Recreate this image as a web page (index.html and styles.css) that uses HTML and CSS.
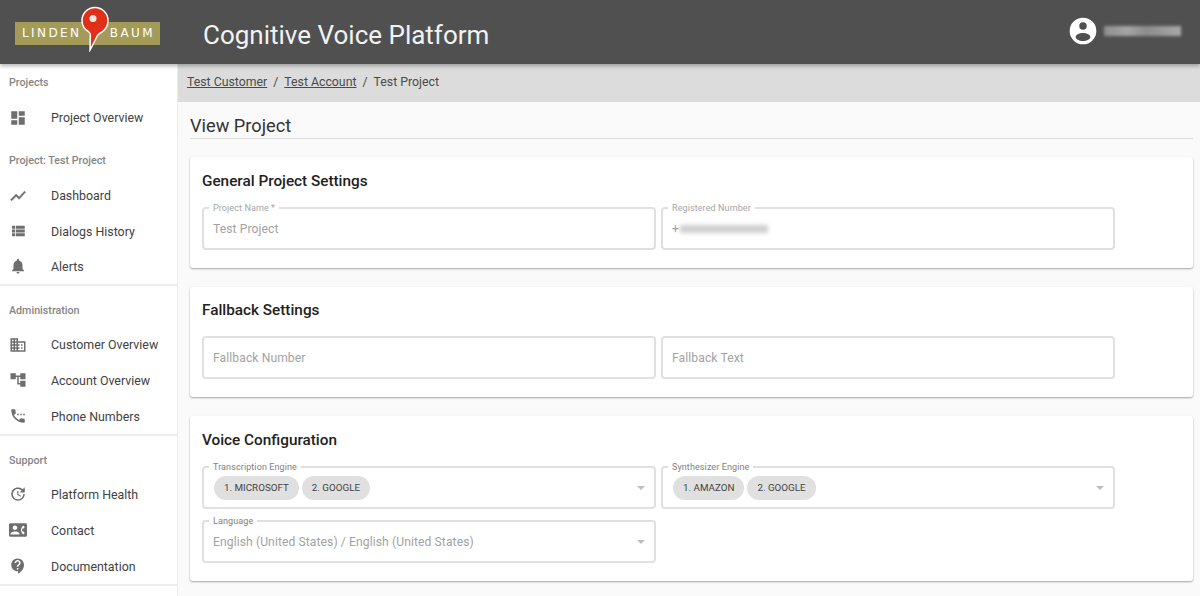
FILE: index.html
```html
<!DOCTYPE html>
<html lang="en">

<head>
    <meta charset="UTF-8">
    <meta name="viewport" content="width=device-width, initial-scale=1.0">
    <title>Cognitive Voice Platform</title>
    <link rel="stylesheet" href="styles.css">
</head>

<body>
    <header class="topbar">
        <div class="logo">
            <span class="logo-word">LINDEN</span>
            <span class="logo-word">BAUM</span>
            <svg class="logo-pin" viewBox="0 0 30 46">
                <path d="M15 1.500C7.800 1.500 2 7.300 2 14.500c0 5.500 3.200 9.500 7 11.500 1.500 1 1.500 2.500 1.300 5L10 44c3-5 5.500-11 7.500-14.500 .8-1.200 1.500-1.700 3-2.500C25 24.500 28 20 28 14.500 28 7.300 22.200 1.500 15 1.500z" fill="#e0301a" stroke="#fff" stroke-width="1.500"/>
                <circle cx="13" cy="12.500" r="3.500" fill="#f5e6df"/>
            </svg>
        </div>
        <div class="app-title">Cognitive Voice Platform</div>
        <div class="user">
            <svg class="user-icon" viewBox="0 0 24 24">
                <path fill-rule="evenodd" d="M12 2a10 10 0 1 0 0 20 10 10 0 0 0 0-20zm0 3.500a2.800 2.800 0 1 1 0 5.600 2.800 2.800 0 0 1 0-5.600zm0 8c3 0 5.500 1.300 5.500 3s-2.500 3-5.500 3-5.500-1.300-5.500-3 2.500-3 5.500-3z"/>
            </svg>
            <div class="user-name"></div>
        </div>
    </header>

    <div class="layout">
        <nav class="sidebar">
            <div class="nav-group">
                <div class="nav-label">Projects</div>
                <a class="nav-item nav-item-top"><svg viewBox="0 0 24 24"><path d="M3 13h8V3H3v10zm0 8h8v-6H3v6zm10 0h8V11h-8v10zm0-18v6h8V3h-8z"/></svg>Project Overview</a>
            </div>
            <div class="nav-group nav-project">
                <div class="nav-label">Project: Test Project</div>
                <a class="nav-item"><svg class="icon-bold" viewBox="0 0 24 24"><path d="M3.500 18.490l6-6.010 4 4L22 6.920l-1.410-1.410-7.090 7.970-4-4L2 16.990z"/></svg>Dashboard</a>
                <a class="nav-item"><svg viewBox="0 0 24 24"><path d="M4 14h4v-4H4v4zm0 5h4v-4H4v4zM4 9h4V5H4v4zm5 5h12v-4H9v4zm0 5h12v-4H9v4zM9 5v4h12V5H9z"/></svg>Dialogs History</a>
                <a class="nav-item"><svg viewBox="0 0 24 24"><path d="M12 22c1.100 0 2-.9 2-2h-4c0 1.100.89 2 2 2zm6-6v-5c0-3.070-1.640-5.640-4.500-6.320V4c0-.83-.67-1.500-1.500-1.500s-1.500.67-1.500 1.500v.68C7.630 5.360 6 7.920 6 11v5l-2 2v1h16v-1l-2-2z"/></svg>Alerts</a>
            </div>
            <div class="nav-group nav-lower">
                <div class="nav-label">Administration</div>
                <a class="nav-item"><svg viewBox="0 0 24 24"><path d="M12 7V3H2v18h20V7H12zM6 19H4v-2h2v2zm0-4H4v-2h2v2zm0-4H4V9h2v2zm0-4H4V5h2v2zm4 12H8v-2h2v2zm0-4H8v-2h2v2zm0-4H8V9h2v2zm0-4H8V5h2v2zm10 12h-8v-2h2v-2h-2v-2h2v-2h-2V9h8v10zm-2-8h-2v2h2v-2zm0 4h-2v2h2v-2z"/></svg>Customer Overview</a>
                <a class="nav-item"><svg viewBox="0 0 24 24"><path d="M22 11V3h-7v3H9V3H2v8h7V8h2v10h4v3h7v-8h-7v3h-2V8h2v3z"/></svg>Account Overview</a>
                <a class="nav-item"><svg viewBox="0 0 24 24"><path d="M13 9h-2v2h2V9zm4 0h-2v2h2V9zm3 6.500c-1.250 0-2.450-.2-3.570-.57-.35-.11-.74-.03-1.020.24l-2.200 2.200c-2.830-1.440-5.150-3.750-6.590-6.580l2.200-2.210c.28-.27.36-.66.25-1.010C8.700 6.450 8.500 5.250 8.500 4c0-.55-.45-1-1-1H4c-.55 0-1 .45-1 1 0 9.390 7.610 17 17 17 .55 0 1-.45 1-1v-3.500c0-.55-.45-1-1-1zM19 9v2h2V9h-2z"/></svg>Phone Numbers</a>
            </div>
            <div class="nav-group nav-lower">
                <div class="nav-label">Support</div>
                <a class="nav-item"><svg viewBox="0 0 24 24"><path d="M21 10.120h-6.780l2.740-2.820c-2.730-2.700-7.150-2.800-9.880-.1-2.730 2.710-2.730 7.080 0 9.790s7.150 2.710 9.880 0C18.320 15.650 19 14.080 19 12.100h2c0 1.980-.88 4.550-2.640 6.290-3.510 3.480-9.210 3.480-12.720 0-3.500-3.470-3.530-9.110-.02-12.580s9.140-3.470 12.650 0L21 3v7.120zM12.500 8v4.250l3.500 2.080-.72 1.210L11 13V8h1.500z"/></svg>Platform Health</a>
                <a class="nav-item"><svg viewBox="0 0 24 24"><path d="M22 3H2C.9 3 0 3.900 0 5v14c0 1.100.9 2 2 2h20c1.100 0 1.990-.9 1.990-2L24 5c0-1.100-.9-2-2-2zM8 6c1.660 0 3 1.340 3 3s-1.340 3-3 3-3-1.340-3-3 1.340-3 3-3zm6 12H2v-1c0-2 4-3.100 6-3.100s6 1.100 6 3.100v1zm3.850-4h1.640L21 16l-1.990 1.990c-1.310-.98-2.280-2.380-2.730-3.990-.18-.64-.28-1.310-.28-2s.1-1.360.28-2c.45-1.620 1.420-3.010 2.730-3.990L21 8l-1.510 2h-1.640c-.22.63-.35 1.300-.35 2s.13 1.370.35 2z"/></svg>Contact</a>
                <a class="nav-item"><svg viewBox="0 0 24 24"><path d="M11.500 2C6.810 2 3 5.810 3 10.500S6.810 19 11.500 19h.5v3c4.860-2.340 8-7 8-11.500C20 5.810 16.190 2 11.500 2zm1 14.500h-2v-2h2v2zm0-3.500h-2c0-3.250 3-3 3-5 0-1.100-.9-2-2-2s-2 .9-2 2h-2c0-2.210 1.790-4 4-4s4 1.790 4 4c0 2.500-3 2.750-3 5z"/></svg>Documentation</a>
            </div>
        </nav>

        <main class="main">
            <div class="breadcrumb">
                <a>Test Customer</a><span class="crumb-sep">/</span><a>Test Account</a><span class="crumb-sep">/</span><span>Test Project</span>
            </div>
            <div class="content">
                <h1 class="page-title">View Project</h1>

                <section class="card">
                    <h2>General Project Settings</h2>
                    <div class="fields">
                        <fieldset class="field">
                            <legend>Project Name *</legend>
                            <span class="value">Test Project</span>
                        </fieldset>
                        <fieldset class="field">
                            <legend>Registered Number</legend>
                            <span class="value">+</span><span class="blurred-number"></span>
                        </fieldset>
                    </div>
                </section>

                <section class="card">
                    <h2>Fallback Settings</h2>
                    <div class="fields">
                        <fieldset class="field">
                            <legend class="no-label"></legend>
                            <span class="value">Fallback Number</span>
                        </fieldset>
                        <fieldset class="field">
                            <legend class="no-label"></legend>
                            <span class="value">Fallback Text</span>
                        </fieldset>
                    </div>
                </section>

                <section class="card">
                    <h2>Voice Configuration</h2>
                    <div class="fields">
                        <fieldset class="field field-select">
                            <legend>Transcription Engine</legend>
                            <span class="chip">1. MICROSOFT</span>
                            <span class="chip">2. GOOGLE</span>
                            <span class="arrow"></span>
                        </fieldset>
                        <fieldset class="field field-select">
                            <legend>Synthesizer Engine</legend>
                            <span class="chip">1. AMAZON</span>
                            <span class="chip">2. GOOGLE</span>
                            <span class="arrow"></span>
                        </fieldset>
                        <fieldset class="field field-select">
                            <legend>Language</legend>
                            <span class="value">English (United States) / English (United States)</span>
                            <span class="arrow"></span>
                        </fieldset>
                    </div>
                </section>
            </div>
        </main>
    </div>
</body>

</html>
```

FILE: styles.css
```css
/* Page base */
body {
    font-family: Roboto, "Liberation Sans", sans-serif;
    margin: 0;
    height: 100vh;
    overflow: hidden;
    display: flex;
    flex-direction: column;
    background-color: #fafafa;
    color: #333;
}

/* Top bar */
.topbar {
    height: 64px;
    flex-shrink: 0;
    display: flex;
    align-items: center;
    background-color: #505050;
    box-shadow: 0 2px 4px rgba(0, 0, 0, 0.3);
    position: relative;
    z-index: 2;
}

.logo {
    position: relative;
    width: 145px;
    height: 23px;
    margin: 2px 0 0 15px;
    display: flex;
    justify-content: space-between;
    align-items: center;
    padding: 0 5px 0 7px;
    box-sizing: border-box;
    background-color: #a59b58;
}

.logo-word {
    font-family: "DejaVu Sans", sans-serif;
    font-size: 12px;
    letter-spacing: 2.400px;
    color: #fff;
}

.logo-pin {
    position: absolute;
    left: 65px;
    top: -16px;
    width: 30px;
    height: 46px;
}

.app-title {
    margin: 6px 0 0 43px;
    font-size: 26px;
    color: #f2f2f2;
}

.user {
    margin: -2px 19px 0 auto;
    display: flex;
    align-items: center;
    gap: 5px;
}

.user-icon {
    width: 32px;
    height: 32px;
    fill: #fff;
}

.user-name {
    width: 77px;
    height: 10px;
    background: linear-gradient(90deg, #8d8d8d, #a5a5a5 30%, #8c8c8c 55%, #a8a8a8);
    filter: blur(1.5px);
}

/* Body below the top bar */
.layout {
    flex: 1;
    display: flex;
    min-height: 0;
}

/* Side navigation */
.sidebar {
    width: 178px;
    flex-shrink: 0;
    box-sizing: border-box;
    background-color: #fff;
    border-right: 1px solid #ececec;
}

.nav-group:first-child {
    padding-bottom: 6px;
}

.nav-project {
    border-bottom: 2px solid #eeeeee;
}

.nav-project .nav-item {
    height: 35.400px;
}

.nav-lower {
    padding-top: 4.500px;
    border-bottom: 2px solid #eeeeee;
}

.nav-label {
    height: 36px;
    line-height: 38px;
    padding-left: 9px;
    font-size: 10.700px;
    font-weight: 500;
    color: #858585;
}

.nav-lower .nav-label {
    line-height: 39px;
}

.nav-item {
    height: 35.800px;
    display: flex;
    align-items: center;
    font-size: 12.400px;
    color: #424242;
}

.nav-item-top {
    height: 35.500px;
    margin-bottom: 0.500px;
}

.nav-item svg {
    width: 18px;
    height: 18px;
    margin: 0 24px 0 9px;
    fill: #6e6e6e;
}

.nav-item .icon-bold {
    stroke: #6e6e6e;
    stroke-width: 0.700;
}

/* Main area */
.main {
    flex: 1;
    min-width: 0;
}

.breadcrumb {
    height: 38px;
    box-sizing: border-box;
    padding-left: 9px;
    line-height: 36px;
    font-size: 12.300px;
    color: #4a4a4a;
    background-color: #dcdcdc;
}

.breadcrumb a {
    text-decoration: underline;
}

.crumb-sep {
    margin: 0 6px;
}

.content {
    padding: 0 7px 0 12px;
}

.page-title {
    margin: 0 0 18px;
    height: 36px;
    line-height: 48px;
    font-size: 18.200px;
    font-weight: 400;
    color: #333;
    border-bottom: 1px solid #dddddd;
}

/* Cards */
.card {
    margin-bottom: 19px;
    padding: 13.500px 12px 18px;
    background-color: #fff;
    border-radius: 3px;
    box-shadow: 0 1px 2px rgba(0, 0, 0, 0.35);
}

.card h2 {
    margin: 0 0 11px;
    font-size: 15.300px;
    line-height: 20px;
    font-weight: 500;
    color: #222;
}

/* Outlined form fields */
.fields {
    display: grid;
    grid-template-columns: 453.500px 453.500px;
    column-gap: 5.500px;
    row-gap: 6px;
}

.field {
    margin: 0;
    min-width: 0;
    height: 48px;
    box-sizing: border-box;
    display: flex;
    align-items: center;
    padding: 0 9px 4px;
    border: 2px solid #e0e0e0;
    border-radius: 4px;
}

.field legend {
    margin-left: -4px;
    padding: 0 4px;
    font-size: 9px;
    line-height: 12px;
    letter-spacing: 0.1px;
    color: #a5a5a5;
}

.field legend.no-label {
    padding: 0;
    height: 12px;
    line-height: 0;
}

.field-select legend {
    color: #808080;
}

.value {
    font-size: 12.100px;
    letter-spacing: 0.1px;
    color: #a2a2a2;
}

.blurred-number {
    width: 88px;
    height: 8px;
    margin-left: 1px;
    background-color: #cfcfcf;
    filter: blur(2px);
}

.chip {
    height: 24px;
    line-height: 24px;
    margin: 0 2px 0 1px;
    padding: 0 10px;
    border-radius: 12px;
    font-size: 9.800px;
    color: #444;
    background-color: #e0e0e0;
}

.arrow {
    margin-left: auto;
    border-left: 4px solid transparent;
    border-right: 4px solid transparent;
    border-top: 4px solid #bdbdbd;
}
```
